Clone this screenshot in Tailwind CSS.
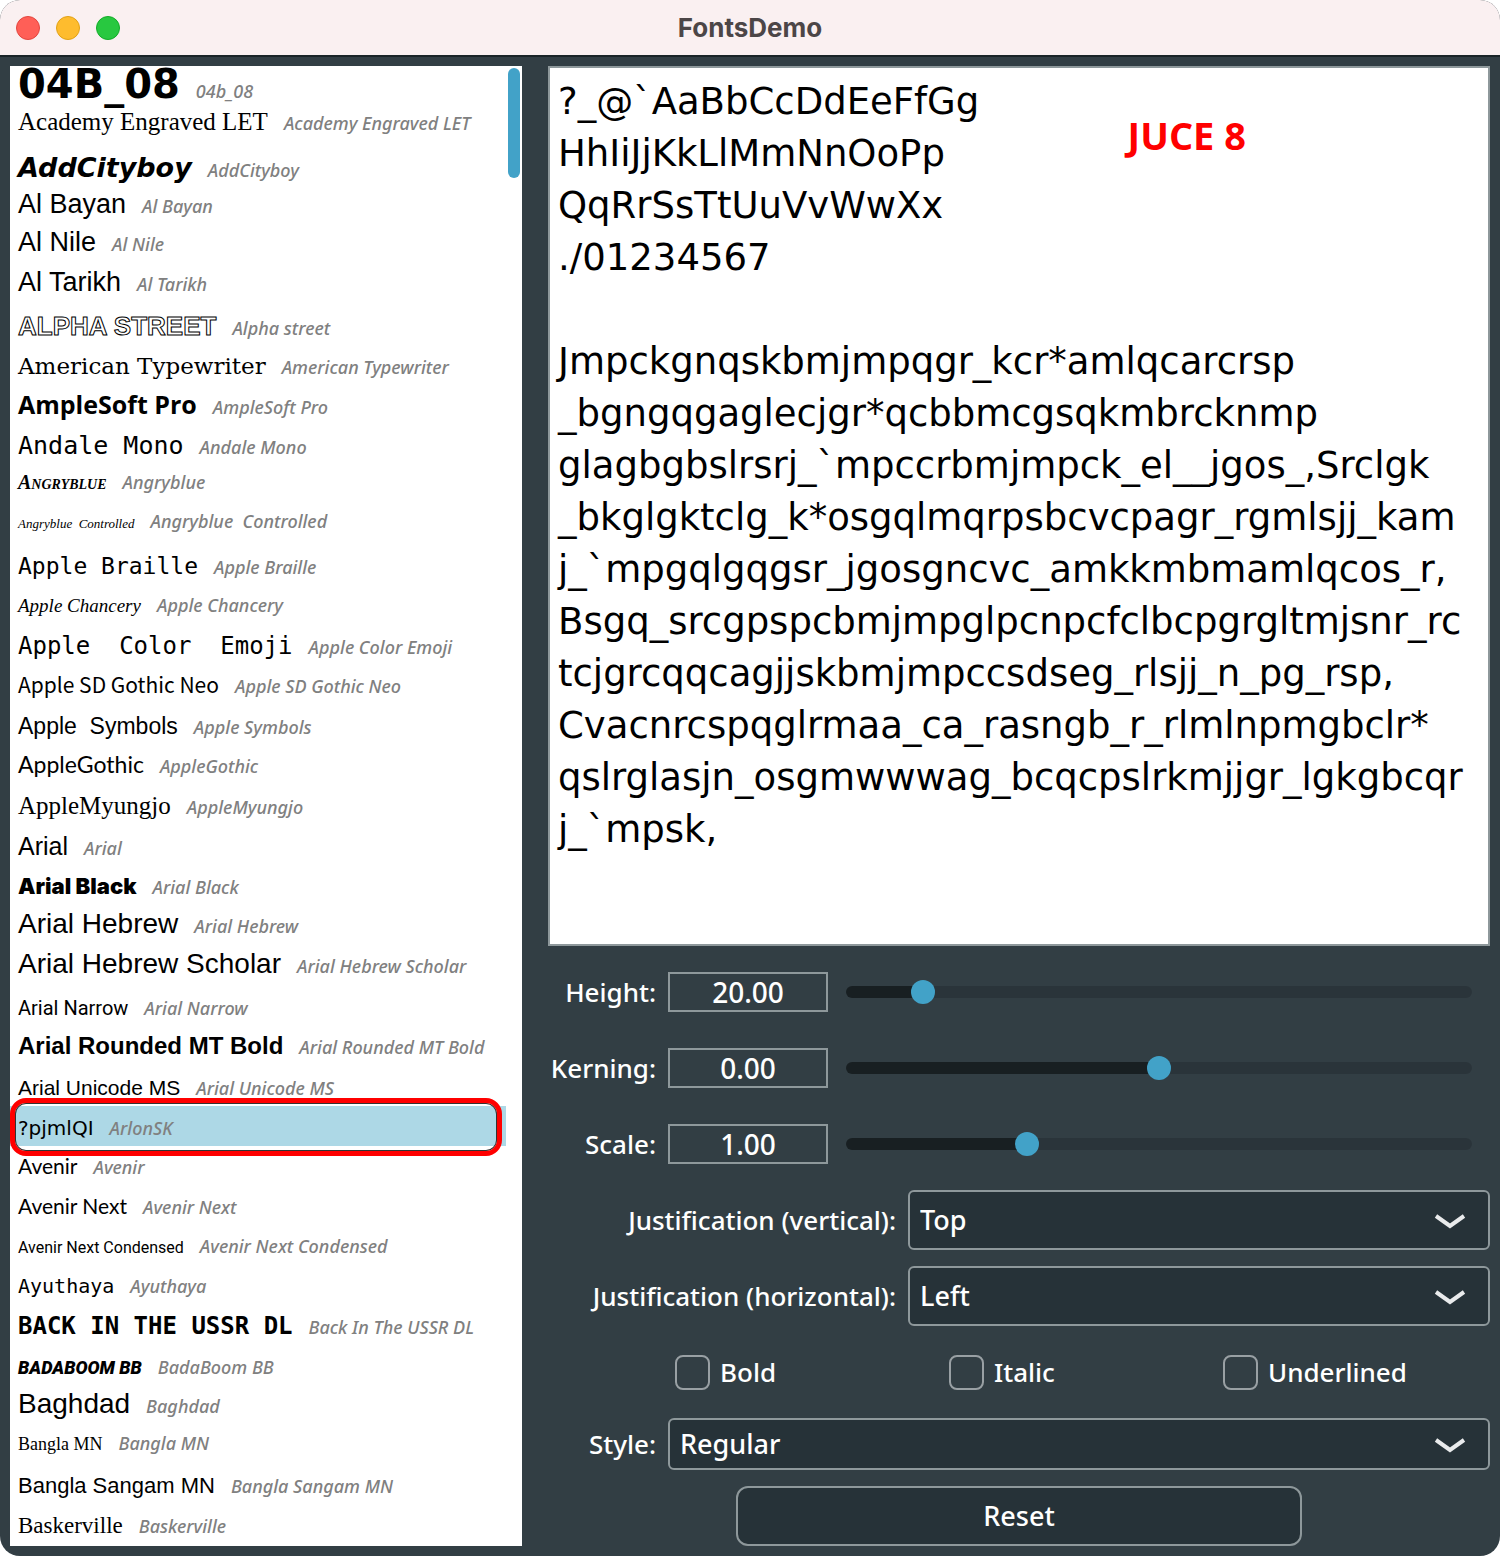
<!DOCTYPE html>
<html lang="en">
<head>
    <meta charset="UTF-8">
    <meta name="viewport" content="width=device-width, initial-scale=1.0">
    <title>FontsDemo</title>
    <script src="https://cdn.jsdelivr.net/npm/@tailwindcss/browser@4"></script>
</head>
<body class="bg-white font-['Noto_Sans','Open_Sans',sans-serif]">
    <div class="flex min-h-screen flex-col overflow-hidden rounded-[20px] bg-[#323e44] text-white">
        <!-- Title bar -->
        <header class="relative flex h-[57px] items-center justify-center border-b-2 border-[#1a2428] bg-[#faf0f1]">
            <div class="absolute left-4 flex gap-4">
                <button type="button" aria-label="Close" class="size-6 rounded-full border border-[#e2463f] bg-[#ff5f57]"></button>
                <button type="button" aria-label="Minimise" class="size-6 rounded-full border border-[#e1a116] bg-[#febc2e]"></button>
                <button type="button" aria-label="Zoom" class="size-6 rounded-full border border-[#12ac28] bg-[#28c840]"></button>
            </div>
            <h1 class="font-['Inter',sans-serif] text-[26px] font-bold text-[#4c4647]">FontsDemo</h1>
        </header>

        <main class="flex flex-1 gap-[26px] px-2.5 pb-2.5 pt-[9px]">
            <!-- Font list -->
            <section class="relative w-[512px] shrink-0 bg-white text-black">
                <ul id="fontList" aria-label="Fonts" class="mr-4"></ul>
                <div class="absolute right-0.5 top-0.5 h-[110px] w-3 rounded-full bg-[#42a2c8]"></div>
            </section>

            <!-- Preview and controls -->
            <section class="flex min-w-0 flex-1 flex-col gap-4 text-[26px] font-medium">
                <div class="relative flex flex-1">
                    <textarea aria-label="Preview text" spellcheck="false" wrap="off" class="w-full resize-none overflow-hidden border-2 border-[#8e989b] bg-white px-2 pt-2 font-['DejaVu_Sans',sans-serif] text-[37px] leading-[52px] font-normal text-black outline-none">?_@`AaBbCcDdEeFfGg
HhIiJjKkLlMmNnOoPp
QqRrSsTtUuVvWwXx
./01234567

Jmpckgnqskbmjmpqgr_kcr*amlqcarcrsp
_bgngqgaglecjgr*qcbbmcgsqkmbrcknmp
glagbgbslrsrj_`mpccrbmjmpck_el__jgos_,Srclgk
_bkglgktclg_k*osgqlmqrpsbcvcpagr_rgmlsjj_kam
j_`mpgqlgqgsr_jgosgncvc_amkkmbmamlqcos_r,
Bsgq_srcgpspcbmjmpglpcnpcfclbcpgrgltmjsnr_rc
tcjgrcqqcagjjskbmjmpccsdseg_rlsjj_n_pg_rsp,
Cvacnrcspqglrmaa_ca_rasngb_r_rlmlnpmgbclr*
qslrglasjn_osgmwwwag_bcqcpslrkmjjgr_lgkgbcqr
j_`mpsk,</textarea>
                    <div class="absolute right-[244px] top-11 font-['Open_Sans',sans-serif] text-[38px] leading-[50px] font-bold text-[#ff0000]">JUCE 8</div>
                </div>

                <div class="flex h-[60px] items-center">
                    <label for="height" class="w-[120px] shrink-0 pr-3 text-right">Height:</label>
                    <input type="text" aria-label="Height value" value="20.00" class="h-10 w-40 shrink-0 border-2 border-[#8e989b] text-center text-[28px]">
                    <input type="range" id="height" min="3" max="160" value="20" step="any" class="slider mx-[18px] h-3 min-w-0 flex-1 appearance-none rounded-full [&::-webkit-slider-thumb]:size-6 [&::-webkit-slider-thumb]:appearance-none [&::-webkit-slider-thumb]:rounded-full [&::-webkit-slider-thumb]:bg-[#42a2c8]">
                </div>
                <div class="flex h-[60px] items-center">
                    <label for="kerning" class="w-[120px] shrink-0 pr-3 text-right">Kerning:</label>
                    <input type="text" aria-label="Kerning value" value="0.00" class="h-10 w-40 shrink-0 border-2 border-[#8e989b] text-center text-[28px]">
                    <input type="range" id="kerning" min="-2" max="2" value="0" step="any" class="slider mx-[18px] h-3 min-w-0 flex-1 appearance-none rounded-full [&::-webkit-slider-thumb]:size-6 [&::-webkit-slider-thumb]:appearance-none [&::-webkit-slider-thumb]:rounded-full [&::-webkit-slider-thumb]:bg-[#42a2c8]">
                </div>
                <div class="flex h-[60px] items-center">
                    <label for="scale" class="w-[120px] shrink-0 pr-3 text-right">Scale:</label>
                    <input type="text" aria-label="Scale value" value="1.00" class="h-10 w-40 shrink-0 border-2 border-[#8e989b] text-center text-[28px]">
                    <input type="range" id="scale" min="0.2" max="3.05" value="1" step="any" class="slider mx-[18px] h-3 min-w-0 flex-1 appearance-none rounded-full [&::-webkit-slider-thumb]:size-6 [&::-webkit-slider-thumb]:appearance-none [&::-webkit-slider-thumb]:rounded-full [&::-webkit-slider-thumb]:bg-[#42a2c8]">
                </div>

                <div class="flex h-[60px] items-center">
                    <label for="vertical" class="w-[360px] shrink-0 pr-3 text-right">Justification (vertical):</label>
                    <div class="relative h-full flex-1">
                        <select id="vertical" class="h-full w-full appearance-none rounded-md border-2 border-[#8e989b] bg-[#263238] px-2.5 text-[27px]">
                            <option>Top</option>
                            <option>Middle</option>
                            <option>Bottom</option>
                        </select>
                        <svg class="pointer-events-none absolute right-6 top-1/2 h-5 w-8 -translate-y-1/2" viewBox="0 0 32 20" fill="none" stroke="#e9ebec" stroke-width="4"><path d="M2 6l14 10 14-10"/></svg>
                    </div>
                </div>
                <div class="flex h-[60px] items-center">
                    <label for="horizontal" class="w-[360px] shrink-0 pr-3 text-right">Justification (horizontal):</label>
                    <div class="relative h-full flex-1">
                        <select id="horizontal" class="h-full w-full appearance-none rounded-md border-2 border-[#8e989b] bg-[#263238] px-2.5 text-[27px]">
                            <option>Left</option>
                            <option>Centred</option>
                            <option>Right</option>
                        </select>
                        <svg class="pointer-events-none absolute right-6 top-1/2 h-5 w-8 -translate-y-1/2" viewBox="0 0 32 20" fill="none" stroke="#e9ebec" stroke-width="4"><path d="M2 6l14 10 14-10"/></svg>
                    </div>
                </div>

                <div class="ml-[120px] grid h-[60px] grid-cols-3 items-center">
                    <label class="flex items-center gap-2.5 pl-[7px]">
                        <input type="checkbox" class="size-[35px] appearance-none rounded-lg border-2 border-[#99a0a4]">
                        Bold
                    </label>
                    <label class="flex items-center gap-2.5 pl-[7px]">
                        <input type="checkbox" class="size-[35px] appearance-none rounded-lg border-2 border-[#99a0a4]">
                        Italic
                    </label>
                    <label class="flex items-center gap-2.5 pl-[7px]">
                        <input type="checkbox" class="size-[35px] appearance-none rounded-lg border-2 border-[#99a0a4]">
                        Underlined
                    </label>
                </div>

                <div class="flex h-[52px] items-center">
                    <label for="style" class="w-[120px] shrink-0 pr-3 text-right">Style:</label>
                    <div class="relative h-full flex-1">
                        <select id="style" class="h-full w-full appearance-none rounded-md border-2 border-[#8e989b] bg-[#263238] px-2.5 text-[27px]">
                            <option>Regular</option>
                        </select>
                        <svg class="pointer-events-none absolute right-6 top-1/2 h-5 w-8 -translate-y-1/2" viewBox="0 0 32 20" fill="none" stroke="#e9ebec" stroke-width="4"><path d="M2 6l14 10 14-10"/></svg>
                    </div>
                </div>

                <button type="button" class="h-[60px] w-3/5 self-center rounded-xl border-2 border-[#8e989b] bg-[#263238] text-[27px]">Reset</button>
            </section>
        </main>
    </div>

    <script>
        // name, sample text, sample classes
        const fonts = [
            ['04b_08', '04B_08', "font-['DejaVu_Sans'] text-[40px] font-bold leading-9"],
            ['Academy Engraved LET', 'Academy Engraved LET', "font-['Liberation_Serif'] text-[25px] leading-8"],
            ['AddCityboy', 'AddCityboy', "font-['DejaVu_Sans'] text-[27px] font-bold italic leading-[44px]"],
            ['Al Bayan', 'Al Bayan', "font-['Liberation_Sans'] text-[27px] leading-9"],
            ['Al Nile', 'Al Nile', "font-['Liberation_Sans'] text-[27px] leading-8"],
            ['Al Tarikh', 'Al Tarikh', "font-['Liberation_Sans'] text-[27px] leading-8"],
            ['Alpha street', 'ALPHA STREET', "font-['Liberation_Sans'] text-[26px] font-bold text-white [-webkit-text-stroke:1px_black] leading-10"],
            ['American Typewriter', 'American Typewriter', "font-['DejaVu_Serif'] text-[23px] leading-10"],
            ['AmpleSoft Pro', 'AmpleSoft Pro', "font-['Open_Sans'] text-[25px] font-bold leading-9"],
            ['Andale Mono', 'Andale Mono', "font-['DejaVu_Sans_Mono'] text-[25px] leading-10"],
            ['Angryblue', 'Angryblue', "font-['Liberation_Serif'] text-[20px] font-bold italic [font-variant:small-caps] leading-8"],
            ['Angryblue  Controlled', 'Angryblue  Controlled', "font-['Liberation_Serif'] text-[13px] italic leading-9"],
            ['Apple Braille', 'Apple Braille', "font-['DejaVu_Sans_Mono'] text-[23px] leading-10"],
            ['Apple Chancery', 'Apple Chancery', "font-['Liberation_Serif'] text-[19px] italic leading-10"],
            ['Apple Color Emoji', 'Apple  Color  Emoji', "font-['DejaVu_Sans_Mono'] text-[24px] leading-10"],
            ['Apple SD Gothic Neo', 'Apple SD Gothic Neo', "font-['Noto_Sans_CJK_KR'] text-[21px] leading-9"],
            ['Apple Symbols', 'Apple  Symbols', "font-['Liberation_Sans'] text-[23px] leading-10"],
            ['AppleGothic', 'AppleGothic', "font-['Lato'] text-[23px] leading-9"],
            ['AppleMyungjo', 'AppleMyungjo', "font-['Liberation_Serif'] text-[25px] leading-10"],
            ['Arial', 'Arial', "font-['Liberation_Sans'] text-[25px] leading-10"],
            ['Arial Black', 'Arial Black', "font-['Inter'] text-[22px] font-black leading-10"],
            ['Arial Hebrew', 'Arial Hebrew', "font-['Liberation_Sans'] text-[28px] leading-9"],
            ['Arial Hebrew Scholar', 'Arial Hebrew Scholar', "font-['Liberation_Sans'] text-[28px] leading-9"],
            ['Arial Narrow', 'Arial Narrow', "font-['Roboto'] text-[20px] leading-[44px]"],
            ['Arial Rounded MT Bold', 'Arial Rounded MT Bold', "font-['Liberation_Sans'] text-[24px] font-bold leading-10"],
            ['Arial Unicode MS', 'Arial Unicode MS', "font-['Liberation_Sans'] text-[21px] leading-[44px]"],
            ['ArlonSK', '?pjmlQI', "font-['DejaVu_Sans'] text-[20px] leading-[44px]"],
            ['Avenir', 'Avenir', "font-['Lato'] text-[21px] leading-10"],
            ['Avenir Next', 'Avenir Next', "font-['Lato'] text-[21px] leading-10"],
            ['Avenir Next Condensed', 'Avenir Next Condensed', "font-['Roboto'] text-[16px] leading-[44px]"],
            ['Ayuthaya', 'Ayuthaya', "font-['DejaVu_Sans_Mono'] text-[20px] leading-10"],
            ['Back In The USSR DL', 'BACK IN THE USSR DL', "font-['DejaVu_Sans_Mono'] text-[24px] font-bold leading-10"],
            ['BadaBoom BB', 'BADABOOM BB', "font-['Roboto'] text-[18px] font-black italic leading-[44px]"],
            ['Baghdad', 'Baghdad', "font-['Liberation_Sans'] text-[28px] leading-9"],
            ['Bangla MN', 'Bangla MN', "font-['Liberation_Serif'] text-[18px] leading-9"],
            ['Bangla Sangam MN', 'Bangla Sangam MN', "font-['Liberation_Sans'] text-[22px] leading-10"],
            ['Baskerville', 'Baskerville', "font-['Liberation_Serif'] text-[23px] leading-10"]
        ];
        const selected = 'ArlonSK';

        document.getElementById('fontList').innerHTML = fonts.map(([name, sample, classes]) => {
            const isSelected = name === selected;
            return `<li class="relative flex h-10 items-baseline gap-4 whitespace-pre px-2 ${isSelected ? 'bg-[#add8e6]' : ''}">` +
                `<span class="${classes}">${sample}</span>` +
                `<span class="text-[18px] leading-6 font-medium italic text-[#808080]">${name}</span>` +
                (isSelected ? '<span class="absolute -top-2 -bottom-2.5 left-0 right-1 rounded-2xl border-[5px] border-[#ff0000] shadow-[inset_0_0_0_1px_#333]"></span>' : '') +
                '</li>';
        }).join('');

        // Darker track up to the thumb
        function paintSlider(slider) {
            const percent = (slider.value - slider.min) / (slider.max - slider.min) * 100;
            slider.style.background = `linear-gradient(to right, #181f22 ${percent}%, #2a343a ${percent}%)`;
        }
        document.querySelectorAll('.slider').forEach(slider => {
            paintSlider(slider);
            slider.addEventListener('input', () => paintSlider(slider));
        });
    </script>
</body>
</html>
